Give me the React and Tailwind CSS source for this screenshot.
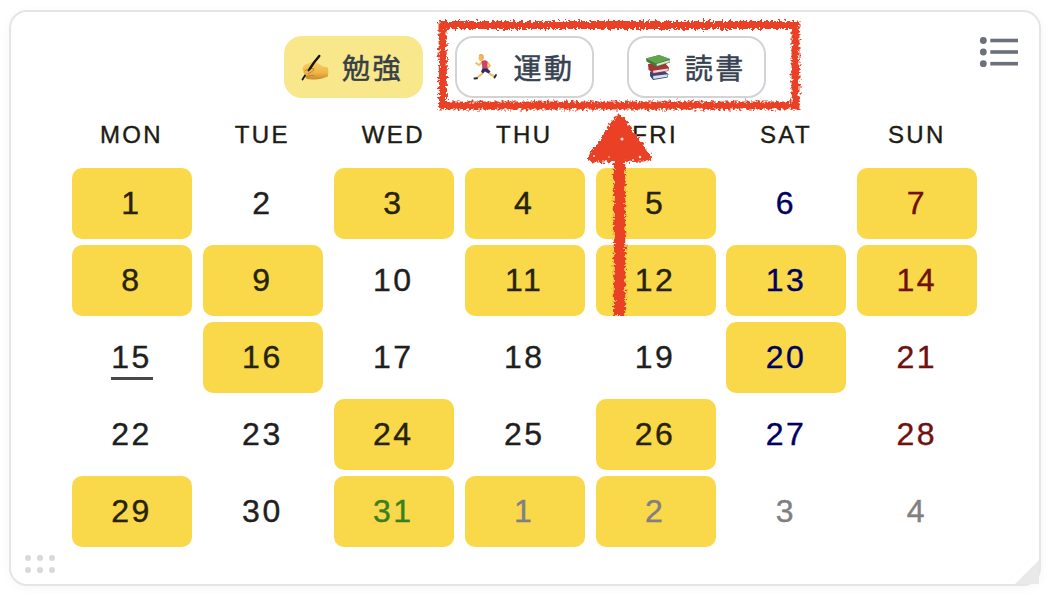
import React from "react";

const DAYS = ["MON", "TUE", "WED", "THU", "FRI", "SAT", "SUN"];

const CELLS = [
  [1, 1], [2, 0], [3, 1], [4, 1], [5, 1], [6, 0], [7, 1],
  [8, 1], [9, 1], [10, 0], [11, 1], [12, 1], [13, 1], [14, 1],
  [15, 0], [16, 1], [17, 0], [18, 0], [19, 0], [20, 1], [21, 0],
  [22, 0], [23, 0], [24, 1], [25, 0], [26, 1], [27, 0], [28, 0],
  [29, 1], [30, 0], [31, 1], [1, 1], [2, 1], [3, 0], [4, 0],
];

function cellColor(i, marked) {
  if (i > 30) return "text-[#808080]";
  if (i === 30) return "text-[#3a8020]";
  if (i % 7 === 5) return "text-[#000060]";
  if (i % 7 === 6) return "text-[#701010]";
  return marked ? "text-[#27220a]" : "text-[#1f1f1f]";
}

function WritingHand() {
  return (
    <svg className="h-7 w-7 shrink-0" viewBox="0 0 28 28">
      <defs>
        <linearGradient id="skin" x1="0" y1="0" x2="0" y2="1">
          <stop offset="0" stopColor="#f8cd62" />
          <stop offset="0.6" stopColor="#f0b748" />
          <stop offset="1" stopColor="#c98a2e" />
        </linearGradient>
      </defs>
      <path d="M2 14.500Q2.500 12 6 11L11 9Q14 8.300 17 10.500L22 13.500 27 14.500Q28 19 26.800 23.500L21 25.500Q16 27 9 26.300 4.500 26.300 4.500 24 2.500 23 3.500 21 1.800 20 2.500 18 1 16.500 2 14.500Z" fill="url(#skin)" />
      <path d="M3.500 18Q8 14.500 12.500 15.500 14 17 11 18.500L7 21M5 24.200Q9 22 13 22.500" stroke="#b97824" strokeWidth=".8" fill="none" />
      <path d="M18.300 3 13 9.500 9 15.500" stroke="#17140f" strokeWidth="2.400" strokeLinecap="round" fill="none" />
      <path d="M9 15.500 7.500 17.500M4 22.500 1.500 26.500" stroke="#17140f" strokeWidth="1.800" strokeLinecap="round" />
    </svg>
  );
}

function Runner() {
  return (
    <svg className="h-7 w-7 shrink-0" viewBox="0 0 28 28" fill="none" strokeLinecap="round" strokeLinejoin="round">
      <path d="M10 9.500 7 12 4 10M15.500 9.500 18 12.500 15 15.500" stroke="#f1bd5b" strokeWidth="1.900" />
      <path d="M11 18.500 9.500 21.500 4.500 25M16 18.500 18.500 21.500 22.500 23.500" stroke="#efbd62" strokeWidth="2" />
      <path d="M9.500 8Q13 6.500 15.500 8.500L15.500 16 10.500 16.500Z" fill="#cc4468" />
      <path d="M10.500 15.500 15.500 15.500 18.500 18.500 16.500 20.500 13 18.500 11 20.500 9 18.500Z" fill="#302b68" />
      <ellipse cx="9" cy="5" rx="2.400" ry="3" fill="#f4bb5c" />
      <path d="M7.500 2.500Q9.500.8 11 3L10.800 5.500" stroke="#e8ad42" strokeWidth="1.500" />
      <path d="M2.500 25.500 5 25.300M22.500 24.500 24 22" stroke="#2a2833" strokeWidth="1.900" />
    </svg>
  );
}

function Books() {
  return (
    <svg className="h-7 w-7 shrink-0" viewBox="0 0 28 28">
      <path d="M6 19 20 18 24.500 21 23.500 24.500 9 27 6 23Z" fill="#33497c" />
      <path d="M9 23 23.800 21.300 23.300 23.800 9.500 26Z" fill="#dde0e6" />
      <path d="M4 11 20 9 25 14.500 24.300 18 9 21 4.500 16.500Z" fill="#a8343a" />
      <path d="M9 17.800 24 15.500 23.800 17.500 9.500 20Z" fill="#e7ded9" />
      <path d="M2 5.500 15 2 26 6V9.500L12.500 14 2.500 8.500Z" fill="#417d37" />
      <path d="M2 5.500 15 2 26 6 12 10.500Z" fill="#60a64c" />
      <path d="M12.500 11 25.700 7V9L13 13Z" fill="#dfe4d6" />
    </svg>
  );
}

function Tab({ icon, label, active }) {
  return (
    <button
      className={
        "flex h-[62px] w-[139px] items-center gap-[13px] rounded-[18px] border-2 pl-[15px] text-[28px] leading-none font-normal tracking-[2.500px] whitespace-nowrap " +
        (active ? "border-[#f9e78c] bg-[#f9e78c] text-[#374045]" : "border-[#d1d3d7] bg-white text-[#374151]")
      }
    >
      {icon}
      <span className="pb-px font-['Noto_Sans_CJK_JP',sans-serif] [-webkit-text-stroke:0.5px_currentColor]">{label}</span>
    </button>
  );
}

function Annotation() {
  return (
    <svg className="pointer-events-none absolute inset-0" width="1054" height="600" viewBox="0 0 1054 600">
      <defs>
        <filter id="crayon" filterUnits="userSpaceOnUse" x="420" y="5" width="400" height="330">
          <feTurbulence type="fractalNoise" baseFrequency="0.38" numOctaves="2" seed="7" result="n" />
          <feDisplacementMap in="SourceGraphic" in2="n" scale="8" xChannelSelector="R" yChannelSelector="G" />
        </filter>
      </defs>
      <g filter="url(#crayon)" stroke="#ea4126" fill="none">
        <path d="M442.500 25H795.500V105.500H443Z" strokeWidth="8" />
        <path d="M619.500 158V316" strokeWidth="11.500" />
        <path d="M619 119 592.500 158 646.500 157Z" fill="#ea4126" strokeWidth="9" strokeLinejoin="round" />
      </g>
      <g fill="#ffe3da">
        <circle cx="622" cy="139" r="1.500" />
        <circle cx="640" cy="157" r="1.300" />
        <circle cx="633" cy="160" r="1" />
        <circle cx="594" cy="156" r="1" />
        <circle cx="609" cy="157" r=".8" />
        <circle cx="603" cy="161" r=".8" />
      </g>
    </svg>
  );
}

export default function App() {
  return (
    <div className="relative h-[600px] w-[1054px] overflow-hidden bg-white pt-[10px] pl-[9px] font-['Liberation_Sans',Arial,sans-serif]">
      <main className="relative flex h-[576px] w-[1032px] flex-col rounded-[18px] border-2 border-[#e5e5e5] bg-white pt-6 shadow-[0_2px_12px_rgba(0,0,0,0.04)]">
        <nav className="ml-[273px] flex gap-[32.400px]">
          <Tab icon={<WritingHand />} label="勉強" active />
          <Tab icon={<Runner />} label="運動" />
          <Tab icon={<Books />} label="読書" />
        </nav>
        <button className="absolute top-[22px] right-[20px]" aria-label="一覧">
          <svg width="40" height="36" viewBox="0 0 40 36" fill="#6c707b">
            {[6.5, 18, 29.7].map((y) => (
              <g key={y}>
                <circle cx="4.300" cy={y} r="3.400" />
                <rect x="11.300" y={y - 1.8} width="27.700" height="3.600" />
              </g>
            ))}
          </svg>
        </button>
        <div className="ml-[60.500px] grid w-[905.400px] grid-cols-[repeat(7,120px)] justify-between pt-[21px] text-center text-[24px] leading-[32px] tracking-[2.400px] text-[#1c1c14] [-webkit-text-stroke:0.4px_currentColor]">
          {DAYS.map((d) => (
            <div key={d}>{d}</div>
          ))}
        </div>
        <div className="ml-[61px] grid w-[905.400px] grid-cols-[repeat(7,120px)] justify-between gap-y-[6px] pt-[17px] text-[32px] leading-[36px] tracking-[2.500px] [-webkit-text-stroke:0.4px_currentColor]">
          {CELLS.map(([n, marked], i) => (
            <div
              key={i}
              className={
                "flex h-[71px] items-center justify-center rounded-[10px] pr-px pb-[2px] " +
                (marked ? "bg-[#f9d84a] " : "") +
                cellColor(i, marked)
              }
            >
              <span className={i === 14 ? "mt-[5px] -mr-px border-b-[3px] border-[#484848] pr-px pb-[2px]" : ""}>{n}</span>
            </div>
          ))}
        </div>
        <div className="absolute bottom-[11px] left-[14px] grid grid-cols-3 gap-[6px]">
          {[0, 1, 2, 3, 4, 5].map((i) => (
            <span key={i} className="size-[6px] rounded-full bg-[#d9d9d9]" />
          ))}
        </div>
        <svg className="absolute right-0 bottom-0" width="24" height="24" viewBox="0 0 24 24">
          <path d="M24 0V24H0Z" fill="#e9e9e9" />
        </svg>
      </main>
      <Annotation />
    </div>
  );
}
